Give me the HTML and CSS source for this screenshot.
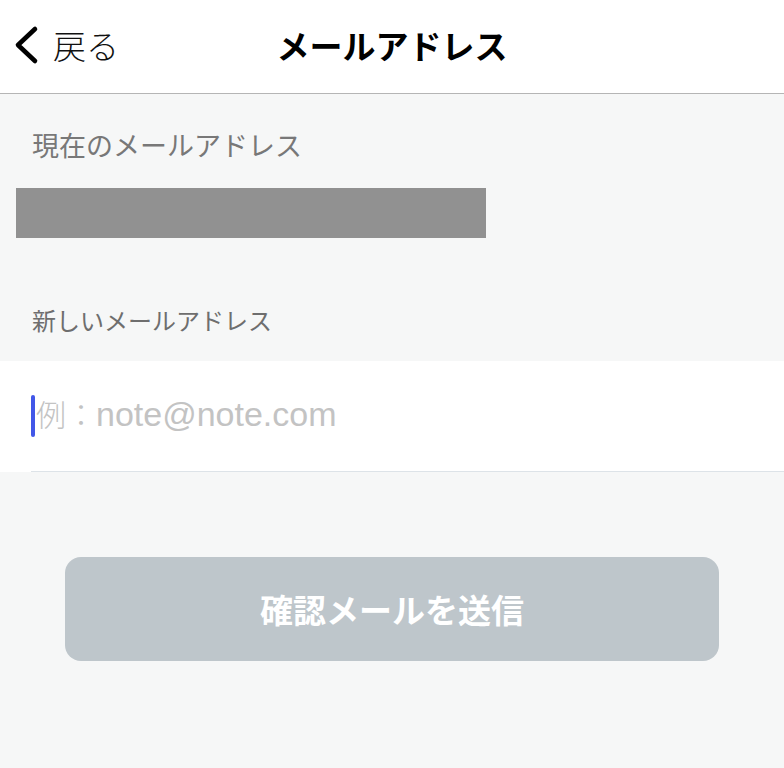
FILE: index.html
```html
<!DOCTYPE html>
<html lang="ja">
<head>
<meta charset="utf-8">
<link rel="stylesheet" href="styles.css">
</head>
<body>
<header class="header">
  <div class="back">
    <svg class="chev" width="30" height="40" viewBox="0 0 30 40"><path d="M24 4 L7 20 L24 36" fill="none" stroke="#000" stroke-width="4.6" stroke-linecap="round" stroke-linejoin="round"/></svg>
    <span class="back-text">戻る</span>
  </div>
  <h1 class="title">メールアドレス</h1>
  <div class="spacer"></div>
</header>
<main class="main">
  <p class="label label-current">現在のメールアドレス</p>
  <div class="masked"></div>
  <p class="label label-new">新しいメールアドレス</p>
  <div class="input-row">
    <div class="input-inner">
      <span class="caret"></span>
      <span class="placeholder"><span class="ph-jp">例：</span><span class="ph-en">note@note.com</span></span>
    </div>
  </div>
  <div class="btn-wrap">
    <button class="btn">確認メールを送信</button>
  </div>
</main>
</body>
</html>
```
FILE: styles.css
```css
html, body {
  margin: 0;
  padding: 0;
}
body {
  width: 784px;
  height: 768px;
  background: #f6f7f7;
  font-family: "Noto Sans CJK JP", "Noto Sans", sans-serif;
  overflow: hidden;
}
.header {
  box-sizing: border-box;
  height: 94px;
  padding-bottom: 4px;
  background: #fff;
  border-bottom: 1px solid #b5b5b5;
  display: grid;
  grid-template-columns: 1fr auto 1fr;
  align-items: center;
}
.back {
  display: flex;
  align-items: center;
  padding-left: 11px;
}
.chev {
  display: block;
}
.back-text {
  font-size: 33px;
  font-weight: 300;
  color: #111;
  margin-left: 12px;
  line-height: 40px;
}
.title {
  margin: 0;
  font-size: 33px;
  font-weight: 700;
  color: #000;
  line-height: 40px;
}
.main {
  display: flex;
  flex-direction: column;
}
.label {
  margin: 0;
  color: #787878;
  font-weight: 400;
  padding-left: 32px;
}
.label-current {
  margin-top: 33px;
  font-size: 27px;
  line-height: 36px;
}
.masked {
  margin-top: 25px;
  margin-left: 16px;
  width: 470px;
  height: 50px;
  background: #919191;
}
.label-new {
  margin-top: 66px;
  font-size: 24px;
  line-height: 32px;
  color: #6e6e6e;
}
.input-row {
  margin-top: 25px;
  background: #fff;
  padding-left: 31px;
}
.input-inner {
  height: 110px;
  border-bottom: 1px solid #dde3e8;
  display: flex;
  align-items: center;
}
.caret {
  width: 4px;
  height: 42px;
  border-radius: 2px;
  background: #4257e8;
}
.placeholder {
  color: #c3c3c3;
  margin-left: 1px;
  line-height: 42px;
  white-space: nowrap;
}
.ph-jp {
  font-family: "Noto Sans CJK JP", sans-serif;
  font-size: 30px;
  font-weight: 300;
}
.ph-en {
  font-family: "Liberation Sans", sans-serif;
  font-size: 34px;
}
.btn-wrap {
  margin-top: 85px;
  display: flex;
  justify-content: center;
}
.btn {
  width: 654px;
  height: 104px;
  border: none;
  border-radius: 16px;
  background: #bec6cb;
  color: #fff;
  font-family: "Noto Sans CJK JP", sans-serif;
  font-size: 33px;
  font-weight: 700;
  padding: 0;
}
```
